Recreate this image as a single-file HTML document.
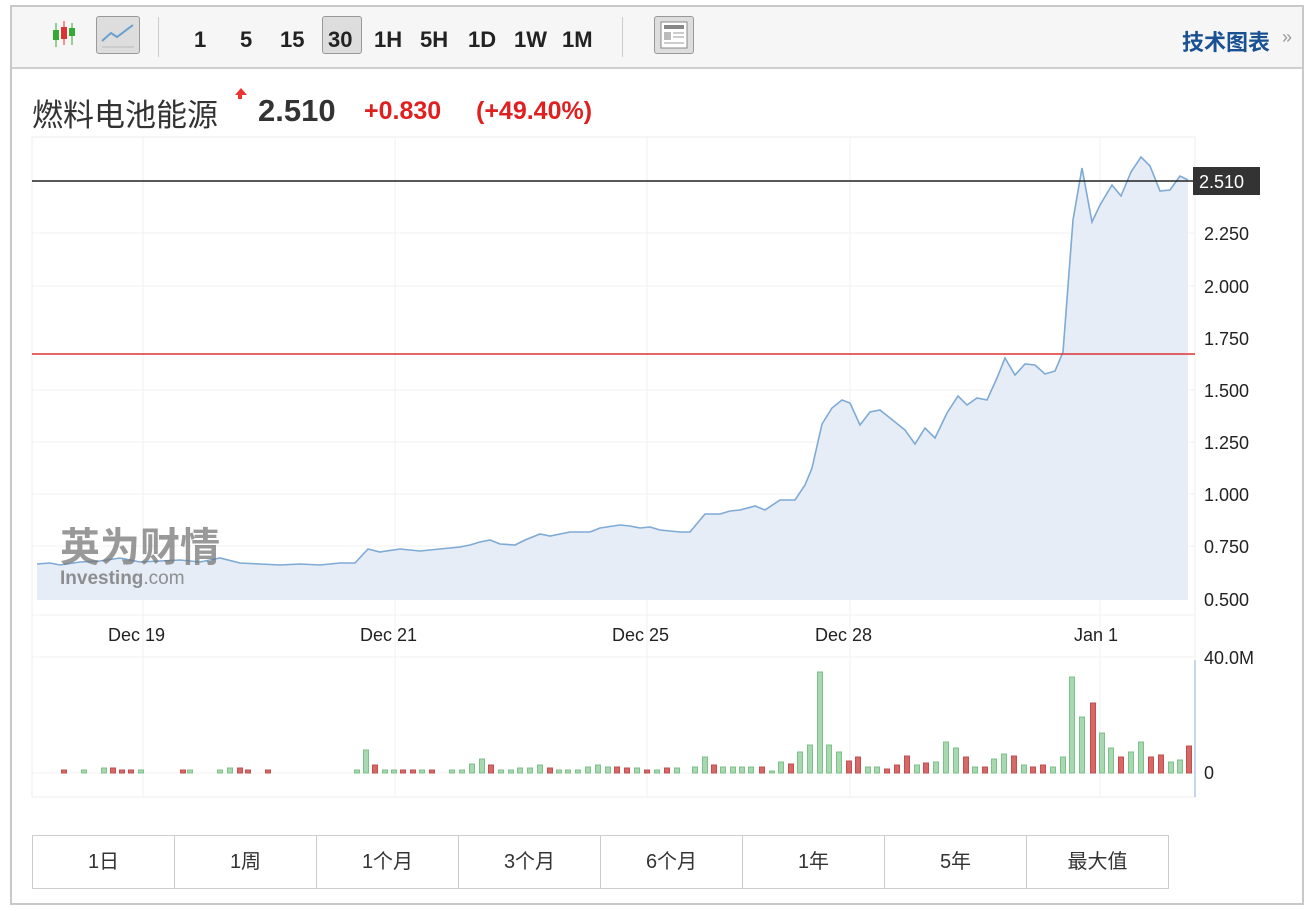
<!DOCTYPE html>
<html><head><meta charset="utf-8"><style>
body{margin:0;background:#fff;width:1316px;height:916px;overflow:hidden;font-family:"Liberation Sans","Noto Sans CJK SC",sans-serif;}
.frame{position:absolute;left:10px;top:5px;width:1294px;height:900px;border:2px solid #c8c8c8;box-sizing:border-box;}
.tb{position:absolute;left:0;top:0;width:100%;height:60px;background:#f6f6f6;border-bottom:2px solid #cfcfcf;}
.tb span{position:absolute;top:20px;font-size:22px;font-weight:bold;color:#222;font-family:"Liberation Sans Narrow","Liberation Sans",sans-serif}
.sep{position:absolute;top:10px;width:1px;height:40px;background:#ccc}
.btn{position:absolute;top:9px;height:38px;border:1px solid #999;border-radius:3px;background:#ddd;box-sizing:border-box}
.tabs{position:absolute;left:20px;top:828px;height:52px;border:1px solid #ccc;display:flex}
.tabs div{width:141px;border-right:1px solid #ccc;text-align:center;line-height:52px;font-size:20px;color:#333}
</style></head><body>
<div class="frame">
<div class="tb">
<svg style="position:absolute;left:38px;top:12px" width="30" height="32"><line x1="6" y1="4" x2="6" y2="28" stroke="#3a3"/><rect x="3" y="11" width="6" height="10" fill="#3a3"/><line x1="14" y1="2" x2="14" y2="26" stroke="#d33"/><rect x="11" y="8" width="6" height="12" fill="#d33"/><line x1="22" y1="4" x2="22" y2="26" stroke="#3a3"/><rect x="19" y="9" width="6" height="8" fill="#3a3"/></svg>
<div class="btn" style="left:84px;width:44px"><svg width="42" height="36"><path d="M5 24 L14 16 L20 20 L36 8" stroke="#6a9fd0" stroke-width="2" fill="none"/><line x1="5" y1="30" x2="37" y2="30" stroke="#bbb"/></svg></div>
<div class="sep" style="left:146px"></div>
<span style="left:182px">1</span><span style="left:228px">5</span><span style="left:268px">15</span>
<div class="btn" style="left:310px;width:40px"></div><span style="left:316px">30</span>
<span style="left:362px">1H</span><span style="left:408px">5H</span><span style="left:456px">1D</span><span style="left:502px">1W</span><span style="left:550px">1M</span>
<div class="sep" style="left:610px"></div>
<div class="btn" style="left:642px;width:40px"><svg width="38" height="36"><rect x="6" y="5" width="26" height="26" fill="#fff" stroke="#888"/><rect x="9" y="8" width="20" height="4" fill="#888"/><rect x="9" y="15" width="7" height="8" fill="#bbb"/><line x1="18" y1="16" x2="29" y2="16" stroke="#999"/><line x1="18" y1="20" x2="29" y2="20" stroke="#999"/><line x1="9" y1="26" x2="29" y2="26" stroke="#999"/></svg></div>
<div style="position:absolute;right:32px;top:18px;font-size:22px;font-weight:bold;color:#1a5193">技术图表</div>
<div style="position:absolute;right:10px;top:20px;font-size:18px;color:#999">»</div>
</div>
<div style="position:absolute;left:20px;top:83px;font-size:31px;color:#333">燃料电池能源</div>
<div style="position:absolute;left:223px;top:81px;width:0;height:0;border-left:6px solid transparent;border-right:6px solid transparent;border-bottom:7px solid #e33"></div>
<div style="position:absolute;left:226px;top:88px;width:4px;height:4px;background:#e33"></div>
<div style="position:absolute;left:246px;top:86px;font-size:31px;font-weight:bold;color:#333">2.510</div>
<div style="position:absolute;left:352px;top:90px;font-size:25px;font-weight:bold;color:#e02020">+0.830</div>
<div style="position:absolute;left:464px;top:90px;font-size:25px;font-weight:bold;color:#e02020">(+49.40%)</div>
<div class="tabs"><div>1日</div><div>1周</div><div>1个月</div><div>3个月</div><div>6个月</div><div>1年</div><div>5年</div><div style="border-right:none">最大值</div></div>
</div>
<svg style="position:absolute;left:0;top:0" width="1316" height="916">
<rect x="32" y="137" width="1163" height="660" fill="none" stroke="#eee"/>
<g stroke="#f2f2f2"><line x1="32" y1="233" x2="1195" y2="233"/><line x1="32" y1="286" x2="1195" y2="286"/><line x1="32" y1="390" x2="1195" y2="390"/><line x1="32" y1="442" x2="1195" y2="442"/><line x1="32" y1="494" x2="1195" y2="494"/><line x1="32" y1="546" x2="1195" y2="546"/><line x1="32" y1="615" x2="1195" y2="615"/><line x1="32" y1="657" x2="1195" y2="657"/><line x1="32" y1="773" x2="1195" y2="773"/><line x1="143" y1="137" x2="143" y2="797"/><line x1="395" y1="137" x2="395" y2="797"/><line x1="647" y1="137" x2="647" y2="797"/><line x1="850" y1="137" x2="850" y2="797"/><line x1="1100" y1="137" x2="1100" y2="797"/></g>
<polygon fill="#e6edf6" points="37,600 37,564 50,563 60,565 80,562 100,561 120,558 140,562 160,561 180,560 200,562 220,558 240,563 260,564 280,565 300,564 320,565 340,563 355,563 368,549 380,552 400,549 420,551 440,549 460,547 470,545 480,542 490,540 500,544 515,545 525,540 540,534 550,536 570,532 590,532 600,528 620,525 630,526 640,528 650,527 660,530 680,532 690,532 705,514 720,514 730,511 740,510 755,506 765,510 780,500 795,500 805,485 812,468 822,424 832,408 842,400 850,403 860,425 870,412 880,410 890,418 905,430 915,444 925,428 935,438 947,413 958,396 967,405 977,398 987,400 997,378 1005,358 1015,375 1025,364 1035,365 1045,374 1055,371 1063,352 1073,220 1082,168 1092,222 1100,205 1112,185 1121,196 1131,172 1141,157 1150,166 1160,191 1170,190 1180,176 1188,180 1188,600"/>
<polyline fill="none" stroke="#7eaad6" stroke-width="1.6" points="37,564 50,563 60,565 80,562 100,561 120,558 140,562 160,561 180,560 200,562 220,558 240,563 260,564 280,565 300,564 320,565 340,563 355,563 368,549 380,552 400,549 420,551 440,549 460,547 470,545 480,542 490,540 500,544 515,545 525,540 540,534 550,536 570,532 590,532 600,528 620,525 630,526 640,528 650,527 660,530 680,532 690,532 705,514 720,514 730,511 740,510 755,506 765,510 780,500 795,500 805,485 812,468 822,424 832,408 842,400 850,403 860,425 870,412 880,410 890,418 905,430 915,444 925,428 935,438 947,413 958,396 967,405 977,398 987,400 997,378 1005,358 1015,375 1025,364 1035,365 1045,374 1055,371 1063,352 1073,220 1082,168 1092,222 1100,205 1112,185 1121,196 1131,172 1141,157 1150,166 1160,191 1170,190 1180,176 1188,180"/>
<text x="60" y="561" font-size="40" font-weight="bold" fill="#777" opacity="0.75" font-family="Noto Sans CJK SC,sans-serif">英为财情</text>
<text x="60" y="584" font-size="19" font-weight="bold" fill="#777" opacity="0.8">Investing<tspan font-weight="normal">.com</tspan></text>
<line x1="32" y1="181" x2="1195" y2="181" stroke="#222" stroke-width="1.5"/>
<line x1="32" y1="354" x2="1195" y2="354" stroke="#d33" stroke-width="1.5"/>
<rect x="1193" y="167" width="67" height="28" fill="#333"/>
<text x="1199" y="188" font-size="18" fill="#fff">2.510</text>
<g font-size="18" fill="#222"><text x="1204" y="240">2.250</text><text x="1204" y="293">2.000</text><text x="1204" y="345">1.750</text><text x="1204" y="397">1.500</text><text x="1204" y="449">1.250</text><text x="1204" y="501">1.000</text><text x="1204" y="553">0.750</text><text x="1204" y="606">0.500</text><text x="1204" y="664">40.0M</text><text x="1204" y="779">0</text>
<text x="108" y="641">Dec 19</text><text x="360" y="641">Dec 21</text><text x="612" y="641">Dec 25</text><text x="815" y="641">Dec 28</text><text x="1074" y="641">Jan 1</text></g>
<line x1="1195" y1="660" x2="1195" y2="797" stroke="#c7d7ea" stroke-width="2"/>
<g id="v"></g>
</svg>
<script>
var d="64r770 84g770 104g768 113r768 122r770 131r770 141g770 183r770 190g770 220g770 230g768 240r768 248r770 268r770 357g770 366g750 375r765 385g770 394g770 403r770 413r770 422g770 432r770 452g770 462g770 472g764 482g759 491r765 501g770 511g770 520g768 530g768 540g765 550r768 559g770 568g770 578g770 588g767 598g765 608g767 617r767 627r768 637g768 647r770 657g770 667r768 677g768 695g767 705g757 714r765 723g767 733g767 742g767 751g767 762r767 772g771 781g762 791r764 800g752 810g745 820g672 829g745 839g752 849r761 858r757 868g767 877g767 887r769 897r765 907r756 917g765 926r763 936g762 946g742 956g748 966r757 975g767 985r767 994g759 1004g754 1014r756 1024g765 1033r767 1043r765 1053g767 1063g757 1072g677 1082g717 1093r703 1102g733 1111g748 1121r757 1131g752 1141g742 1151r757 1161r755 1171g762 1180g760 1189r746".split(" ");
var s="";d.forEach(function(t){var m=t.match(/(\d+)([rg])(\d+)/);var x=+m[1],c=m[2],y=+m[3];s+='<rect x="'+(x-2.5)+'" y="'+y+'" width="5" height="'+(773-y)+'" fill="'+(c=="g"?"#a8d8b0":"#d86868")+'" stroke="'+(c=="g"?"#7cc08a":"#c05050")+'"/>';});
document.getElementById("v").innerHTML=s;
</script>
</body></html>
